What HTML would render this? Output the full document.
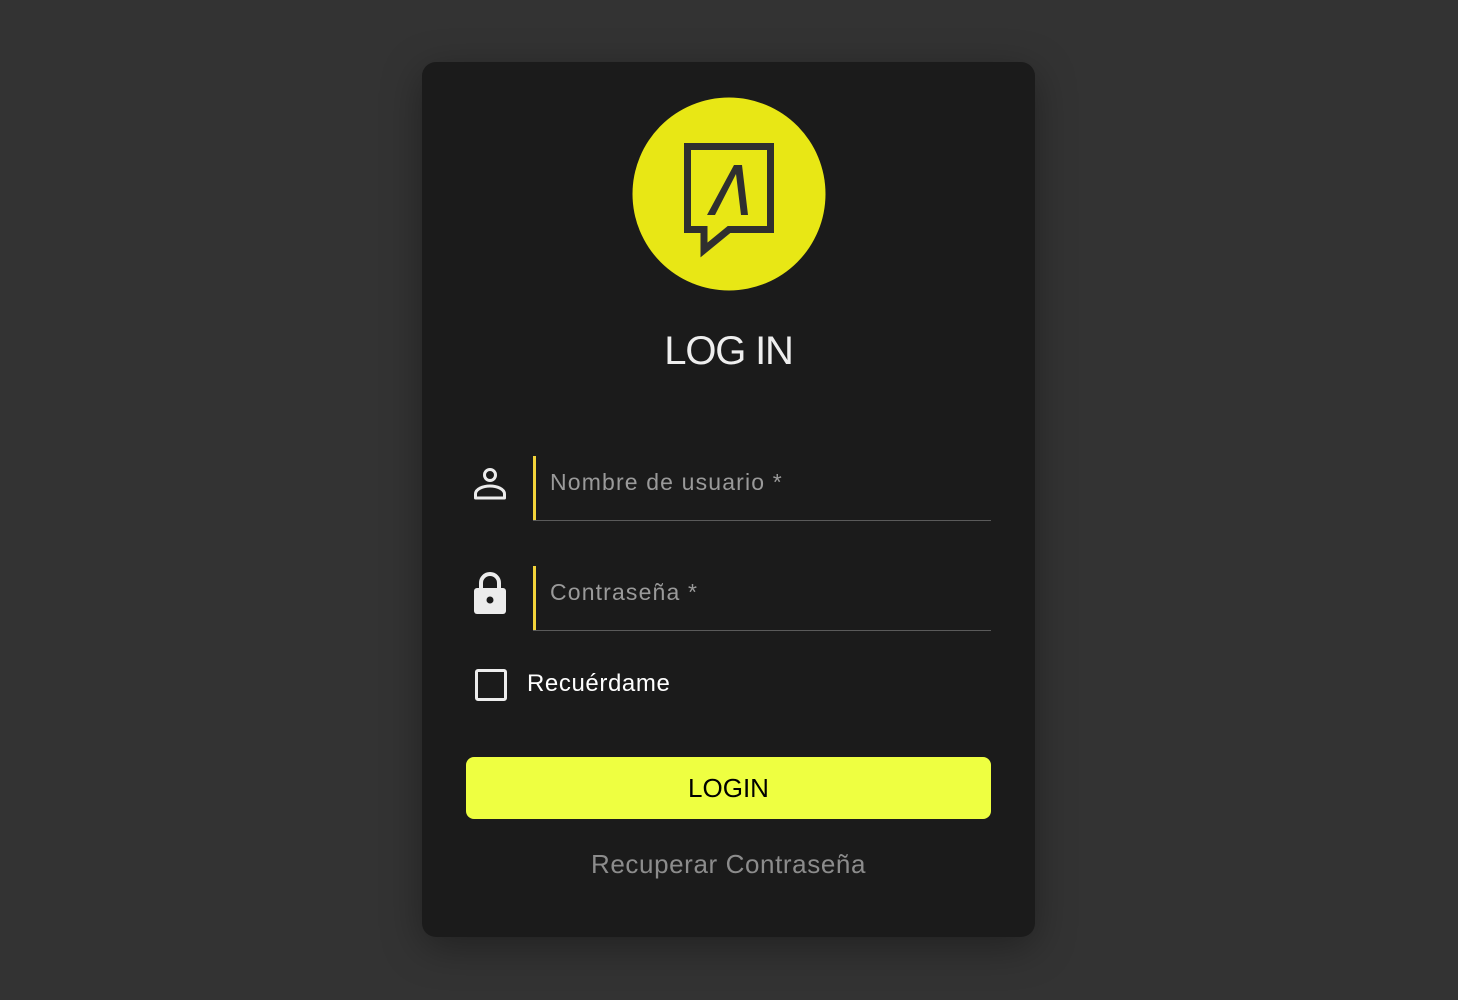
<!DOCTYPE html>
<html><head><meta charset="utf-8"><style>
html,body{margin:0;padding:0;width:1458px;height:1000px;background:#333333;font-family:"Liberation Sans",Roboto,sans-serif;overflow:hidden}
.card{position:absolute;left:422px;top:62px;width:613px;height:875px;background:#1b1b1b;border-radius:14px;box-shadow:0 10px 40px rgba(0,0,0,0.35)}
.abs{position:absolute}
.title{left:0;width:613px;top:263px;text-align:center;color:#eeeeee;font-size:40px;line-height:52px;letter-spacing:-1.2px}
.bar{width:3px;background:#f2d33a}
.line{height:1px;background:#5a5a5a}
.ph{color:#9a9a9a;font-size:23px;line-height:30px;letter-spacing:1.15px}
.btn{left:44px;top:695px;width:525px;height:62px;background:#eeff41;border-radius:8px;color:#000;font-size:26px;line-height:62px;text-align:center}
.link{left:0;width:613px;top:786px;text-align:center;color:#8c8c8c;font-size:26px;line-height:32px;letter-spacing:0.6px}
</style></head><body>
<div class="card">
  <svg class="abs" style="left:210px;top:35px" width="194" height="194" viewBox="0 0 194 194">
    <circle cx="97" cy="97" r="96.5" fill="#e8e715"/>
    <path d="M55.5 49.5 H138.5 V132.5 H97 L72 153 V132.5 H55.5 Z" fill="none" stroke="#2f2f2f" stroke-width="7" stroke-linejoin="miter"/>
    <path d="M75 118 L102 68 L110 68 L116 118 L109 118 L104 77 L83 118 Z" fill="#2f2f2f"/>
  </svg>
  <div class="abs title">LOG IN</div>

  <svg class="abs" style="left:50px;top:403px" width="36" height="36" viewBox="0 0 36 36">
    <circle cx="18" cy="10" r="5.5" fill="none" stroke="#ececec" stroke-width="3"/>
    <path d="M3.5 33 V29 C3.5 24 11 21 18 21 C25 21 32.5 24 32.5 29 V33 Z" fill="none" stroke="#ececec" stroke-width="3" stroke-linejoin="round"/>
  </svg>
  <div class="abs bar" style="left:111px;top:394px;height:64px"></div>
  <div class="abs line" style="left:111px;top:458px;width:458px"></div>
  <div class="abs ph" style="left:128px;top:405px">Nombre de usuario *</div>

  <svg class="abs" style="left:50px;top:508px" width="36" height="46" viewBox="0 0 36 46">
    <path d="M9 19 V13 A9 9 0 0 1 27 13 V19" fill="none" stroke="#ececec" stroke-width="4"/>
    <rect x="2" y="18" width="32" height="26" rx="3" fill="#ececec"/>
    <circle cx="18" cy="30" r="3.5" fill="#1b1b1b"/>
  </svg>
  <div class="abs bar" style="left:111px;top:504px;height:64px"></div>
  <div class="abs line" style="left:111px;top:568px;width:458px"></div>
  <div class="abs ph" style="left:128px;top:515px">Contraseña *</div>

  <div class="abs" style="left:53px;top:607px;width:26px;height:26px;border:3px solid #ececec;border-radius:3px"></div>
  <div class="abs" style="left:105px;top:607px;color:#fff;font-size:24px;line-height:30px;letter-spacing:0.6px">Recuérdame</div>

  <div class="abs btn">LOGIN</div>
  <div class="abs link">Recuperar Contraseña</div>
</div>
</body></html>
